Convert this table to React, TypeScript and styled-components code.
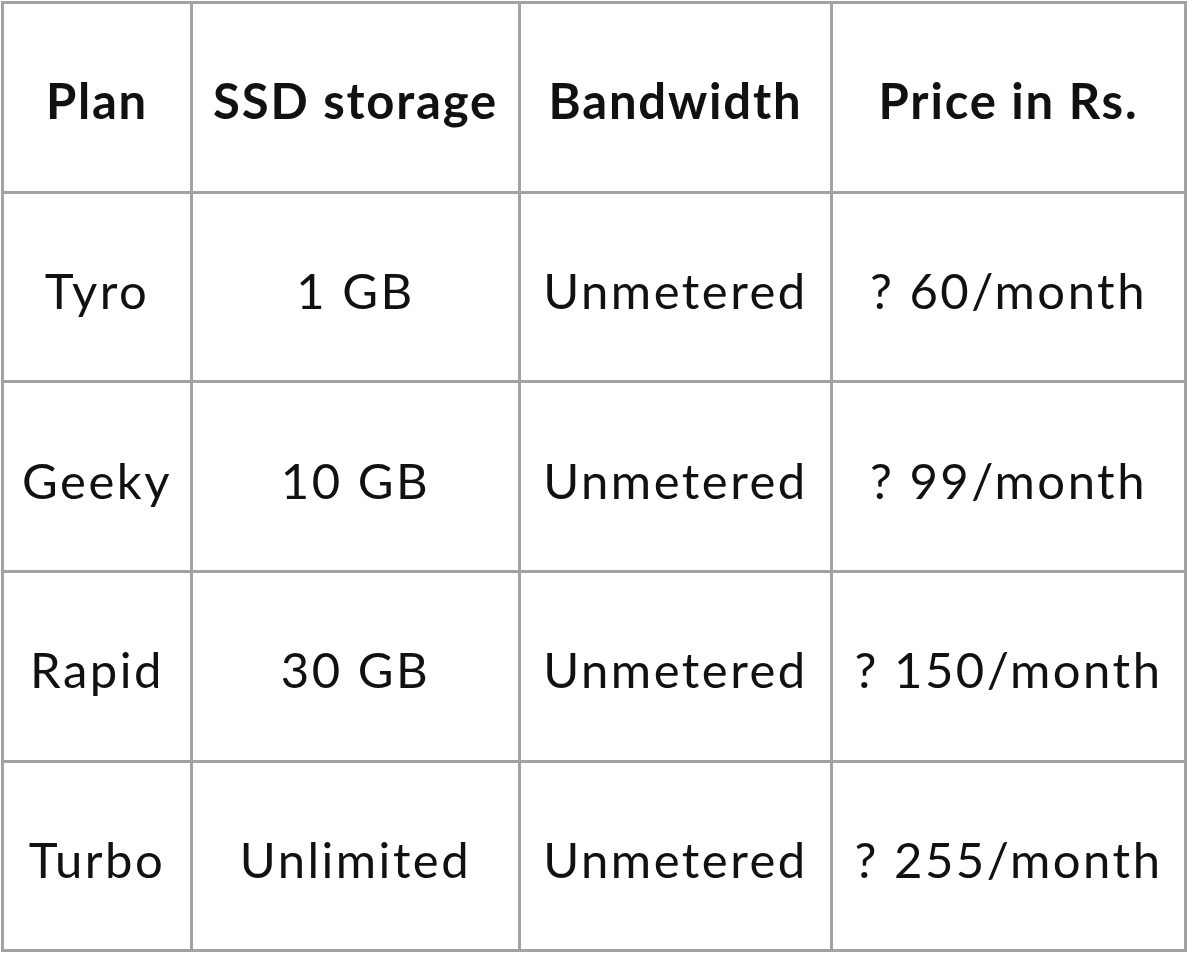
import React from 'react'
import styled, { createGlobalStyle } from 'styled-components'

const GlobalStyle = createGlobalStyle`
  html, body {
    margin: 0;
    padding: 0;
    background: #ffffff;
  }
  body {
    font-family: Lato, "Open Sans", sans-serif;
    color: #111111;
  }
`;

const Page = styled.div`
  padding: 1px 0 0 1px;
`;

const Table = styled.table`
  border-collapse: collapse;
  table-layout: fixed;
  width: 1183px;
`;

const Cell = styled.td<{ $bold?: boolean }>`
  border: 3px solid #a3a3a3;
  height: 180.7px;
  padding: 6px 0 0;
  text-align: center;
  vertical-align: middle;
  font-size: 49px;
  letter-spacing: ${p => (p.$bold ? '1.8px' : '2.5px')};
  font-weight: ${p => (p.$bold ? 700 : 400)};
  white-space: nowrap;
  overflow: hidden;
`;

const widths = [189, 328, 312, 354];

const header = ['Plan', 'SSD storage', 'Bandwidth', 'Price in Rs.'];

const rows = [
  ['Tyro', '1 GB', 'Unmetered', '? 60/month'],
  ['Geeky', '10 GB', 'Unmetered', '? 99/month'],
  ['Rapid', '30 GB', 'Unmetered', '? 150/month'],
  ['Turbo', 'Unlimited', 'Unmetered', '? 255/month']
];

const App: React.FC = () => {
  return (
    <Page>
      <GlobalStyle />
      <Table>
        <colgroup>
          {widths.map((w, i) => (
            <col key={i} style={{ width: w }} />
          ))}
        </colgroup>
        <tbody>
          <tr>
            {header.map(h => (
              <Cell key={h} $bold>{h}</Cell>
            ))}
          </tr>
          {rows.map(r => (
            <tr key={r[0]}>
              {r.map((c, i) => (
                <Cell key={i}>{c}</Cell>
              ))}
            </tr>
          ))}
        </tbody>
      </Table>
    </Page>
  )
};

export default App
